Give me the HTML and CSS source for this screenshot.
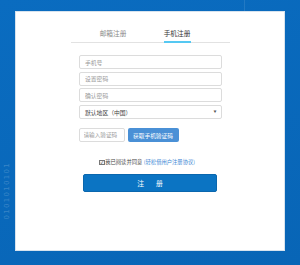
FILE: index.html
```html
<!DOCTYPE html>
<html lang="zh-CN">
<head>
    <meta charset="UTF-8">
    <title>注册</title>
    <link rel="stylesheet" href="styles.css">
</head>
<body>
<!-- background decoration -->
<div class="Deco-binary">0101010101</div>
<div class="Deco-line"></div>

<div class="Card">
    <div class="Tabs">
        <div class="Tabs-item">邮箱注册</div>
        <div class="Tabs-item is-active">手机注册</div>
    </div>

    <form class="Form">
        <input class="Form-input" type="text" placeholder="手机号">
        <input class="Form-input" type="password" placeholder="设置密码">
        <input class="Form-input" type="password" placeholder="确认密码">
        <div class="Form-select">
            <span>默认地区（中国）</span>
            <span class="Form-caret">▼</span>
        </div>

        <div class="Form-code">
            <input class="Form-input Form-input--code" type="text" placeholder="请输入验证码">
            <button class="Form-sms" type="button">获取手机验证码</button>
        </div>

        <label class="Form-agree">
            <span class="Form-check">✓</span>我已阅读并同意
            <a class="Form-link">(轻松借用户注册协议)</a>
        </label>

        <button class="Form-submit" type="button">注册</button>
    </form>
</div>
</body>
</html>
```

FILE: styles.css
```css
html, body {
    margin: 0;
    width: 300px;
    height: 265px;
    overflow: hidden;
}
body {
    position: relative;
    background: linear-gradient(160deg, #0a6cc0, #0865b6);
    font-family: "Noto Sans CJK SC", "Noto Sans", sans-serif;
    padding: 11px 15px 0 15px;
    box-sizing: border-box;
}
.Deco-binary {
    position: absolute;
    left: 3px;
    top: 162px;
    writing-mode: vertical-rl;
    transform: rotate(180deg);
    font-family: "DejaVu Sans", sans-serif;
    font-size: 7px;
    letter-spacing: 1.3px;
    color: rgba(255, 255, 255, 0.2);
}
.Deco-line {
    position: absolute;
    left: 244px;
    top: 0;
    width: 1px;
    height: 11px;
    background: rgba(255, 255, 255, 0.1);
}
.Card {
    position: relative;
    height: 240px;
    background: #fff;
    border: 1px solid #d7e3ee;
    box-sizing: border-box;
    padding-top: 16px;
}
.Tabs {
    display: flex;
    width: 159px;
    margin: 0 auto;
    padding-left: 29px;
    gap: 37px;
    box-sizing: border-box;
    border-bottom: 1px solid #e2e2e2;
}
.Tabs-item {
    font-size: 6.7px;
    line-height: 10px;
    padding-bottom: 3px;
    margin-bottom: -1px;
    border-bottom: 2px solid transparent;
    color: #8a8a8a;
    width: 27px;
    text-align: center;
    white-space: nowrap;
}
.Tabs-item.is-active {
    color: #333;
    border-bottom-color: #55c8f2;
}
.Form {
    width: 143px;
    margin: 12px auto 0;
    display: flex;
    flex-direction: column;
}
.Form-input, .Form-select {
    height: 14px;
    margin: 0 0 2.7px;
    padding: 0 0 0 5.5px;
    border: 1px solid #dcdcdc;
    border-radius: 2px;
    box-sizing: border-box;
    font-family: inherit;
    font-size: 5.8px;
    color: #333;
    outline: none;
}
.Form-input::placeholder {
    color: #9a9a9a;
}
.Form-select {
    display: flex;
    align-items: center;
    justify-content: space-between;
    padding-right: 4px;
    color: #444;
}
.Form-caret {
    font-size: 3px;
    color: #555;
}
.Form-code {
    display: flex;
    gap: 3px;
    margin-top: 6.5px;
}
.Form-input--code {
    width: 46px;
    height: 13.5px;
    margin: 0;
    padding-left: 4px;
    font-size: 5.6px;
}
.Form-sms {
    width: 51px;
    height: 13.5px;
    padding: 0;
    border: 0;
    border-radius: 2px;
    background: #4a90d6;
    color: #fff;
    font-family: inherit;
    font-size: 5.7px;
}
.Form-agree {
    display: flex;
    align-items: center;
    margin: 17px 0 0 20.7px;
    font-size: 5.3px;
    line-height: 7px;
    color: #444;
    white-space: nowrap;
}
.Form-check {
    width: 3.5px;
    height: 3.5px;
    border: 0.5px solid #777;
    background: #f4f4f4;
    font-size: 4px;
    line-height: 3.5px;
    text-align: center;
    color: #222;
    margin-right: 0.5px;
}
.Form-link {
    color: #3b86d4;
    margin-left: 1.5px;
}
.Form-submit {
    width: 133.5px;
    height: 18.7px;
    margin: 8px auto 0;
    padding: 0 0 0 12px;
    border: 1px solid #0a67ae;
    border-radius: 2px;
    background: #0b74c3;
    color: #fff;
    font-family: inherit;
    font-size: 6.8px;
    letter-spacing: 12px;
}
```
